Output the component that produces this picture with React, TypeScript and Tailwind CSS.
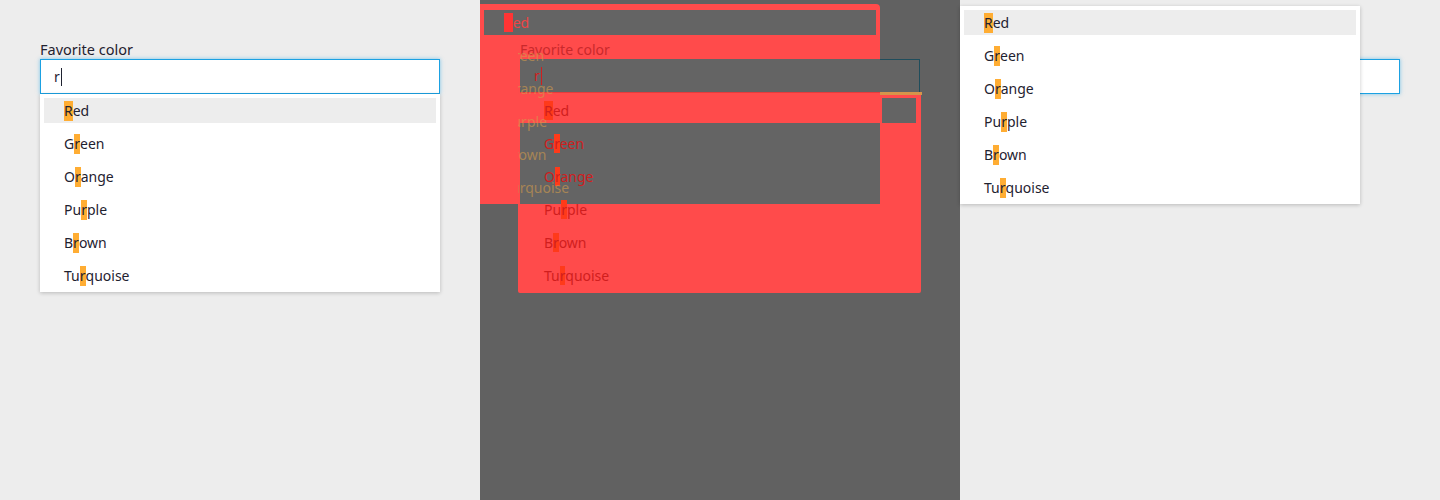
import React from "react"

const colors = ["Red", "Green", "Orange", "Purple", "Brown", "Turquoise"]

const font = { fontFamily: '"Noto Sans", "Open Sans", sans-serif' }

function Marked({ name, mark, rest }: { name: string; mark: string; rest: string }) {
  const i = name.toLowerCase().indexOf("r")
  return (
    <span className="whitespace-pre">
      <span className={rest}>{name.slice(0, i)}</span>
      <span className={mark}>{name[i]}</span>
      <span className={rest}>{name.slice(i + 1)}</span>
    </span>
  )
}

function ColorList({ className = "" }: { className?: string }) {
  return (
    <div className={`w-[400px] bg-white p-1 flex flex-col gap-2 shadow-[0_1px_4px_rgba(0,0,0,0.22)] ${className}`}>
      {colors.map((c, i) => (
        <div
          key={c}
          className={`h-[25px] pl-5 flex items-center text-[14px] text-[#1f2230] ${i === 0 ? "bg-[#ededed]" : ""}`}
        >
          <Marked name={c} mark="bg-[#ffad33] leading-[20px] inline-block" rest="" />
        </div>
      ))}
    </div>
  )
}

function Field({ caret = true }: { caret?: boolean }) {
  return (
    <div className="w-[400px] h-[35px] bg-white border border-[#1ba1e2] shadow-[0_0_4px_rgba(27,161,226,0.55)] pl-[13px] flex items-center text-[14px] text-[#1f2230]">
      <span>r</span>
      {caret && <span className="w-px h-[18px] bg-[#1f2230] ml-px" />}
    </div>
  )
}

function DiffPanel() {
  const red = "bg-[#ff4b4b]"
  return (
    <div className="relative w-[480px] h-[500px] bg-[#616161] overflow-hidden text-[14px]">
      {/* upper list (shifted) */}
      <div className={`absolute left-0 top-[4px] w-[400px] h-[200px] ${red} rounded-tr-[4px]`} />
      <div className="absolute left-[4px] top-[10px] w-[392px] h-[25px] bg-[#646464] pl-5 flex items-center">
        <Marked name="Red" mark="bg-[#ff3434] text-[#ff3434]" rest="text-[#f04444]" />
      </div>
      <div className="absolute left-[40px] top-[40px] leading-[19px] text-[#c9292c]">Favorite color</div>

      {/* field */}
      <div className="absolute left-[40px] top-[59px] w-[360px] h-[34px] bg-[#646464] border-b border-[#e53c3c] pl-[14px] flex items-center text-[#d01e1e]">
        <span>r</span>
        <span className="w-px h-[18px] bg-[#d01e1e] ml-px" />
      </div>
      <div className="absolute left-[400px] top-[59px] w-[40px] h-[35px] border-t border-r border-[#1f4d5c] bg-[#646464]" />
      <div className="absolute left-[400px] top-[92px] w-[42px] h-[3px] bg-[#d6944a]" />

      {/* lower list (original) */}
      <div className={`absolute left-[38px] top-[95px] w-[403px] h-[198px] ${red} rounded-b-[2px]`} />
      <div className="absolute left-[402px] top-[98px] w-[34px] h-[25px] bg-[#646464]" />
      <div className="absolute left-[40px] top-[123px] w-[360px] h-[81px] bg-[#646464]" />
      <div className="absolute left-[44px] top-[98px] w-[356px] flex flex-col gap-2">
        {colors.map((c) => (
          <div key={c} className="h-[25px] pl-5 flex items-center">
            <Marked name={c} mark="bg-[#ff3a1a] text-[#d01e1e]" rest="text-[#d01e1e]" />
          </div>
        ))}
      </div>

      {/* ghost fragments of the shifted list */}
      <div className="absolute left-[38px] top-[43px] w-[60px] overflow-hidden">
        <div className="ml-[-14px] flex flex-col gap-2">
          {colors.slice(1).map((c) => (
            <div key={c} className="h-[25px] flex items-center text-[#d39b4c] opacity-60">
              {c}
            </div>
          ))}
        </div>
      </div>
    </div>
  )
}

export default function App() {
  return (
    <div className="flex w-[1440px] h-[500px]" style={font}>
      <div className="w-[480px] h-[500px] bg-[#ededed] pl-10 pt-[40px]">
        <div className="text-[14.5px] leading-[19px] text-[#1f2230]">Favorite color</div>
        <Field />
        <ColorList />
      </div>

      <DiffPanel />

      <div className="relative w-[480px] h-[500px] bg-[#ededed] pl-10 pt-[40px]">
        <div className="text-[14.5px] leading-[19px] text-[#1f2230]">Favorite color</div>
        <Field caret={false} />
        <ColorList className="absolute left-0 top-[6px]" />
      </div>
    </div>
  )
}
